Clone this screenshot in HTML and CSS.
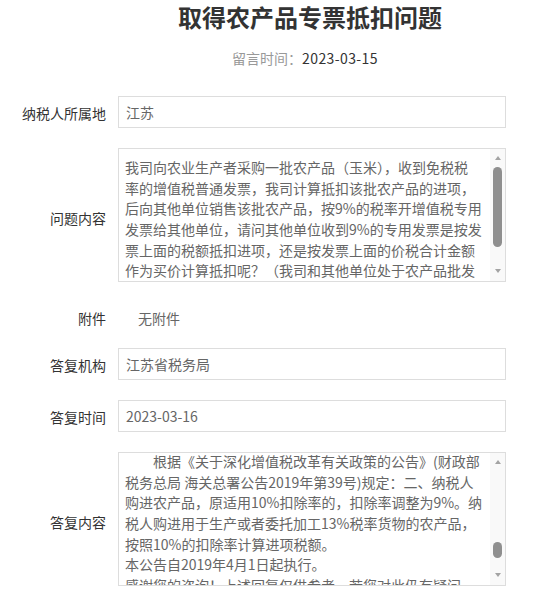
FILE: index.html
```html
<!DOCTYPE html>
<html lang="zh-CN">
<head>
<meta charset="utf-8">
<title>取得农产品专票抵扣问题</title>
<link rel="stylesheet" href="styles.css">
</head>
<body>
<div class="page">
  <header class="head">
    <h1 class="title">取得农产品专票抵扣问题</h1>
    <p class="meta"><span class="meta-label">留言时间：</span><span class="meta-date">2023-03-15</span></p>
  </header>
  <div class="form">
    <div class="row">
      <div class="label">纳税人所属地</div>
      <div class="field">江苏</div>
    </div>
    <div class="row">
      <div class="label label-tall">问题内容</div>
      <div class="area">
        <div class="area-body">
          <div class="line">我司向农业生产者采购一批农产品（玉米），收到免税税</div>
          <div class="line">率的增值税普通发票，我司计算抵扣该批农产品的进项，</div>
          <div class="line">后向其他单位销售该批农产品，按9%的税率开增值税专用</div>
          <div class="line">发票给其他单位，请问其他单位收到9%的专用发票是按发</div>
          <div class="line">票上面的税额抵扣进项，还是按发票上面的价税合计金额</div>
          <div class="line">作为买价计算抵扣呢？（我司和其他单位处于农产品批发</div>
          <div class="line">环节）</div>
        </div>
        <div class="sb">
          <div class="sb-btn sb-up"><span class="tri-up"></span></div>
          <div class="sb-track"><div class="sb-thumb thumb-q"></div></div>
          <div class="sb-btn sb-down"><span class="tri-down"></span></div>
        </div>
      </div>
    </div>
    <div class="row row-attach">
      <div class="label">附件</div>
      <div class="attach">无附件</div>
    </div>
    <div class="row">
      <div class="label">答复机构</div>
      <div class="field">江苏省税务局</div>
    </div>
    <div class="row">
      <div class="label">答复时间</div>
      <div class="field">2023-03-16</div>
    </div>
    <div class="row">
      <div class="label label-tall">答复内容</div>
      <div class="area">
        <div class="area-body area-body-scrolled">
          <div class="line">　　根据《关于深化增值税改革有关政策的公告》(财政部</div>
          <div class="line">税务总局 海关总署公告2019年第39号)规定：二、纳税人</div>
          <div class="line">购进农产品，原适用10%扣除率的，扣除率调整为9%。纳</div>
          <div class="line">税人购进用于生产或者委托加工13%税率货物的农产品，</div>
          <div class="line">按照10%的扣除率计算进项税额。</div>
          <div class="line">本公告自2019年4月1日起执行。</div>
          <div class="line">感谢您的咨询！上述回复仅供参考，若您对此仍有疑问，</div>
          <div class="line">请咨询主管税务机关。</div>
        </div>
        <div class="sb">
          <div class="sb-btn sb-up"><span class="tri-up"></span></div>
          <div class="sb-track"><div class="sb-thumb thumb-r"></div></div>
          <div class="sb-btn sb-down"><span class="tri-down"></span></div>
        </div>
      </div>
    </div>
  </div>
</div>
</body>
</html>
```

FILE: styles.css
```css
html, body {
  margin: 0;
  padding: 0;
  background: #ffffff;
}
body {
  font-family: "Noto Sans CJK SC", "Microsoft YaHei", sans-serif;
  color: #333333;
  font-size: 14px;
}
.page {
  width: 558px;
}
.head {
  padding-left: 62px;
  text-align: center;
}
.title {
  margin: 0;
  font-size: 24px;
  line-height: 33px;
  font-weight: 700;
  color: #333333;
}
.meta {
  margin: 15px 0 0;
  padding-right: 10px;
  font-size: 14px;
  line-height: 20px;
}
.meta-label {
  color: #999999;
}
.meta-date {
  color: #333333;
  letter-spacing: 0.4px;
}
.form {
  margin-top: 28px;
  display: flex;
  flex-direction: column;
  gap: 20px;
}
.row {
  display: flex;
  align-items: center;
  gap: 12px;
}
.label {
  width: 106px;
  flex: none;
  text-align: right;
  line-height: 20px;
  color: #333333;
  padding-top: 1px;
}
.label-tall {
  padding-top: 6px;
}
.field {
  width: 388px;
  height: 32px;
  box-sizing: border-box;
  border: 1px solid #dddddd;
  padding: 0 7px;
  line-height: 30px;
  color: #666666;
}
.area {
  position: relative;
  width: 388px;
  height: 134px;
  box-sizing: border-box;
  border: 1px solid #dddddd;
}
.area-body {
  height: 100%;
  box-sizing: border-box;
  overflow: hidden;
  padding: 8px 25px 0 6px;
  color: #666666;
}
.area-body-scrolled {
  padding-top: 0;
}
.area-body-scrolled .line:first-child {
  margin-top: -2px;
}
.line {
  white-space: nowrap;
  line-height: 20.7px;
  height: 20.7px;
}
.sb {
  position: absolute;
  top: 0;
  right: 0;
  bottom: 0;
  width: 15px;
  background: #f9f9f9;
  display: flex;
  flex-direction: column;
  align-items: center;
}
.sb-btn {
  height: 16px;
  width: 15px;
  display: flex;
  align-items: center;
  justify-content: center;
  flex: none;
}
.sb-up {
  padding-top: 1px;
}
.sb-down {
  padding-bottom: 2px;
}
.tri-up {
  width: 0;
  height: 0;
  border-left: 3.5px solid transparent;
  border-right: 3.5px solid transparent;
  border-bottom: 4px solid #a3a3a3;
}
.tri-down {
  width: 0;
  height: 0;
  border-left: 3.5px solid transparent;
  border-right: 3.5px solid transparent;
  border-top: 4px solid #a3a3a3;
}
.sb-track {
  flex: 1;
  width: 15px;
  display: flex;
  flex-direction: column;
  align-items: center;
}
.sb-thumb {
  width: 9px;
  border-radius: 4.5px;
  background: #8f8f8f;
}
.thumb-q {
  margin-top: 1px;
  height: 80px;
}
.thumb-r {
  margin-top: 72px;
  height: 16px;
}
.row-attach {
  align-items: flex-start;
  height: 26px;
}
.row-attach .label,
.row-attach .attach {
  padding-top: 6px;
}
.attach {
  padding-left: 20px;
  line-height: 20px;
  color: #666666;
}
```
